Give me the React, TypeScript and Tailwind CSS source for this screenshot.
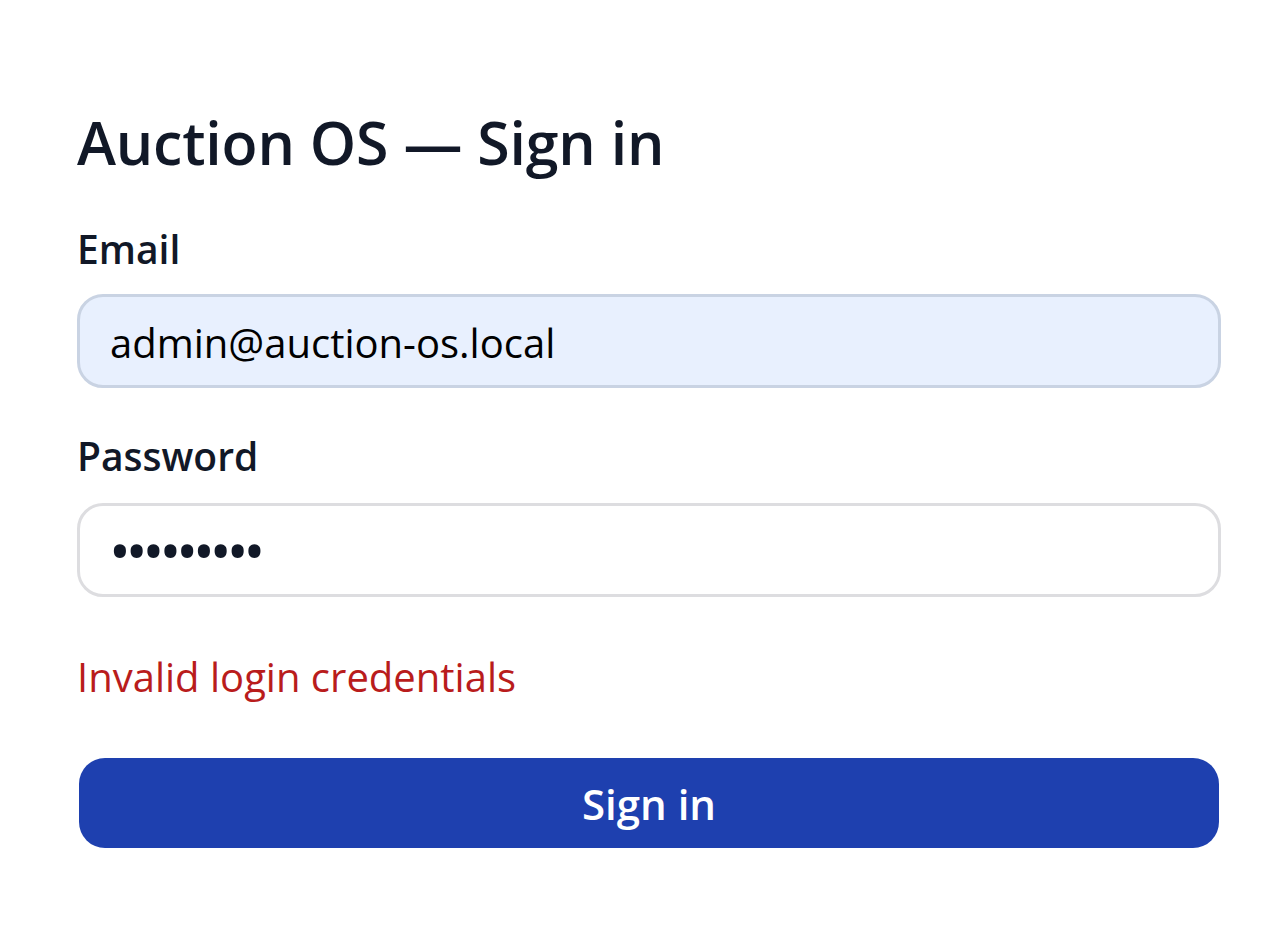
import React from "react";

export default function App() {
  return (
    <div
      className="min-h-screen w-full bg-white"
      style={{ fontFamily: '"Open Sans", "Noto Sans", sans-serif' }}
    >
      <form
        className="ml-[77px] flex w-[1144px] flex-col pt-[106px]"
        onSubmit={(e) => e.preventDefault()}
      >
        <h1 className="h-[72px] text-[59px] leading-[72px] font-semibold tracking-[-0.2px] text-[#111827]">
          Auction OS — Sign in
        </h1>
        <label className="mt-[43px] h-[56px] text-[39px] leading-[56px] font-semibold text-[#111827]">
          Email
        </label>
        <input
          readOnly
          defaultValue="admin@auction-os.local"
          className="mt-[17px] h-[94px] w-full rounded-[26px] border-[3px] border-[#c9d3e3] bg-[#e8f0fe] px-[30px] pt-[2px] text-[40px] leading-[54px] text-black outline-none"
        />
        <label className="mt-[40px] h-[56px] text-[39px] leading-[56px] font-semibold text-[#111827]">
          Password
        </label>
        <input
          readOnly
          type="password"
          defaultValue="123456789"
          className="mt-[19px] h-[94px] w-full rounded-[26px] border-[3px] border-[#dddde0] bg-white px-[29px] text-[58px] leading-[68px] tracking-[-5px] text-[#111827] outline-none"
        />
        <p className="mt-[52px] h-[56px] text-[40px] leading-[56px] text-[#b91c1c]">
          Invalid login credentials
        </p>
        <button
          type="submit"
          className="mx-[2px] mt-[53px] h-[90px] rounded-[26px] bg-[#1e40af] text-[42px] font-semibold text-white"
        >
          Sign in
        </button>
      </form>
    </div>
  );
}
